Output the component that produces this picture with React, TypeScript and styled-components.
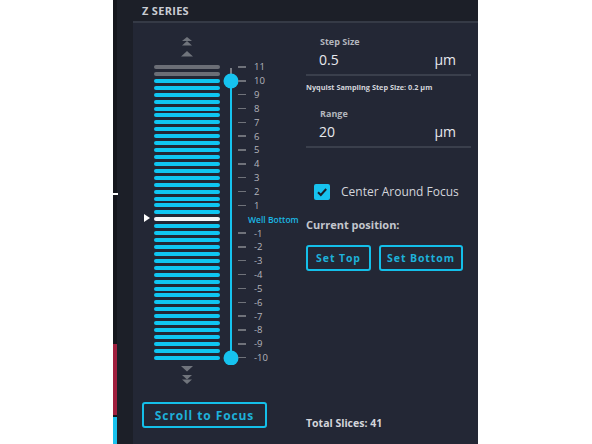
import React from "react";
import styled, { createGlobalStyle } from "styled-components";

const GlobalStyle = createGlobalStyle`
  html, body {
    margin: 0;
    padding: 0;
    background: #ffffff;
    font-family: "Open Sans", "Liberation Sans", sans-serif;
  }
`;

const Page = styled.div`
  display: flex;
  width: 592px;
  height: 444px;
  overflow: hidden;
  background: #ffffff;
`;

const Blank = styled.div`
  width: 113px;
  flex-shrink: 0;
`;

const Rail = styled.div`
  width: 4px;
  display: flex;
  flex-direction: column;
  background: #14161d;
  position: relative;
`;

const RailSpace = styled.div`
  flex: 1;
`;

const RailSegment = styled.div<{ $color: string; $h: number }>`
  height: ${(p) => p.$h}px;
  background: ${(p) => p.$color};
`;

const RailNotch = styled.div`
  position: absolute;
  left: 0;
  top: 193px;
  width: 5px;
  height: 2px;
  background: #ffffff;
`;

const Panel = styled.div`
  width: 361px;
  display: flex;
  flex-direction: column;
  background: #1c1f28;
  padding-left: 16px;
  box-sizing: border-box;
`;

const Header = styled.div`
  height: 21px;
  padding-left: 9px;
  display: flex;
  align-items: center;
  font-size: 11px;
  font-weight: 700;
  color: #c9ccd3;
  letter-spacing: 0.3px;
`;

const Body = styled.div`
  flex: 1;
  display: flex;
  border-top: 2px solid #353a46;
  background: #232735;
`;

const LeftCol = styled.div`
  width: 173px;
  display: flex;
  flex-direction: column;
  padding-top: 13px;
  box-sizing: border-box;
`;

const Chevrons = styled.div`
  width: 66px;
  margin-left: 21px;
  display: flex;
  justify-content: center;
`;

const StackRow = styled.div`
  display: flex;
  align-items: flex-start;
  padding-left: 21px;
  margin-top: 2px;
  height: 305px;
`;

const Bars = styled.div`
  position: relative;
  width: 66px;
  padding-top: 5px;
  display: flex;
  flex-direction: column;
  gap: 2.93px;
`;

const Bar = styled.div<{ $kind: "off" | "on" | "well" }>`
  height: 4px;
  border-radius: 2px;
  background: ${(p) =>
    p.$kind === "off" ? "#6b6e76" : p.$kind === "well" ? "#f4f5f7" : "#0fc6f2"};
`;

const Marker = styled.div`
  position: absolute;
  left: -10px;
  top: 154px;
  width: 0;
  height: 0;
  border-top: 4.5px solid transparent;
  border-bottom: 4.5px solid transparent;
  border-left: 6px solid #ffffff;
`;

const SliderSvg = styled.svg`
  margin-left: 3px;
  flex-shrink: 0;
`;

const Ticks = styled.div`
  display: flex;
  flex-direction: column;
  margin-left: -1px;
`;

const TickRow = styled.div`
  height: 13.857px;
  display: flex;
  align-items: center;
`;

const Dash = styled.div`
  width: 8px;
  height: 1.5px;
  background: #6f727a;
  margin-right: 8px;
`;

const TickLabel = styled.span<{ $well?: boolean }>`
  font-size: ${(p) => (p.$well ? "8.5px" : "9.5px")};
  font-weight: ${(p) => (p.$well ? 600 : 400)};
  color: ${(p) => (p.$well ? "#1bb8e4" : "#b3b5bc")};
  margin-left: ${(p) => (p.$well ? "10px" : "0")};
  white-space: nowrap;
`;

const OutlineButton = styled.button<{ $w: number; $fs: number }>`
  width: ${(p) => p.$w}px;
  height: 26px;
  box-sizing: border-box;
  border: 2px solid #14bfe9;
  border-radius: 3px;
  background: transparent;
  color: #1eb1da;
  font-family: "Open Sans", "Liberation Sans", sans-serif;
  font-weight: 700;
  font-size: ${(p) => p.$fs}px;
  letter-spacing: 0.9px;
  padding: 0;
  cursor: pointer;
`;

const ScrollWrap = styled.div`
  margin-top: 13px;
  margin-left: 9px;
`;

const RightCol = styled.div`
  width: 165px;
  display: flex;
  flex-direction: column;
  padding-top: 13px;
  padding-bottom: 14px;
  box-sizing: border-box;
`;

const Field = styled.div<{ $mt: number }>`
  margin-top: ${(p) => p.$mt}px;
  border-bottom: 2px solid #3a3f4c;
  padding-bottom: 5px;
`;

const FieldLabel = styled.div`
  padding-left: 14px;
  font-size: 9px;
  line-height: 12px;
  font-weight: 700;
  color: #b3b6bd;
`;

const FieldValue = styled.div`
  margin-top: 3px;
  display: flex;
  justify-content: space-between;
  padding: 0 15px 0 13px;
  font-size: 14px;
  line-height: 18px;
  color: #e7e9ed;
`;

const Note = styled.div`
  margin-top: 6px;
  font-size: 7.3px;
  line-height: 10px;
  font-weight: 700;
  color: #d3d5db;
  white-space: nowrap;
`;

const CheckRow = styled.label`
  margin-top: 35px;
  display: flex;
  align-items: center;
  padding-left: 8px;
  font-size: 12px;
  color: #d3d5db;
`;

const CheckBox = styled.span`
  width: 16px;
  height: 16px;
  border-radius: 2px;
  background: #17c2ee;
  display: flex;
  align-items: center;
  justify-content: center;
  margin-right: 11px;
`;

const SubTitle = styled.div`
  margin-top: 18px;
  font-size: 11px;
  line-height: 14px;
  font-weight: 700;
  color: #c3c6cd;
`;

const ButtonRow = styled.div`
  margin-top: 13px;
  display: flex;
  gap: 8px;
`;

const Total = styled.div`
  margin-top: auto;
  font-size: 10.5px;
  line-height: 14px;
  font-weight: 700;
  color: #d3d5db;
`;

function UpChevrons() {
  return (
    <svg width="20" height="22" viewBox="0 0 20 22">
      <path d="M10 1 L15 5 L5 5 Z" fill="#70747c" />
      <path d="M10 5 L15 9.5 L5 9.5 Z" fill="#70747c" />
      <path d="M10 15 L16 20.5 L4 20.5 Z" fill="#70747c" />
    </svg>
  );
}

function DownChevrons() {
  return (
    <svg width="20" height="24" viewBox="0 0 20 24">
      <path d="M4 1 L16 1 L10 6.5 Z" fill="#70747c" />
      <path d="M5 10 L15 10 L10 14.5 Z" fill="#70747c" />
      <path d="M5 14.5 L15 14.5 L10 19 Z" fill="#70747c" />
    </svg>
  );
}

const bars: ("off" | "on" | "well")[] = Array.from({ length: 43 }, (_, i) =>
  i < 2 ? "off" : i === 22 ? "well" : "on"
);

const ticks = Array.from({ length: 22 }, (_, i) => 11 - i);

export default function App() {
  return (
    <Page>
      <GlobalStyle />
      <Blank />
      <Rail>
        <RailSpace />
        <RailSegment $color="#a01f3e" $h={71} />
        <RailSegment $color="#14161d" $h={2} />
        <RailSegment $color="#18c2ee" $h={27} />
        <RailNotch />
      </Rail>
      <Panel>
        <Header>Z SERIES</Header>
        <Body>
          <LeftCol>
            <Chevrons>
              <UpChevrons />
            </Chevrons>
            <StackRow>
              <Bars>
                {bars.map((b, i) => (
                  <Bar key={i} $kind={b} />
                ))}
                <Marker />
              </Bars>
              <SliderSvg width="16" height="305" viewBox="0 0 16 305">
                <line x1="8" y1="8" x2="8" y2="16" stroke="#7a7d85" strokeWidth="2" />
                <line x1="8" y1="21" x2="8" y2="298" stroke="#16c3ef" strokeWidth="2" />
                <circle cx="8" cy="21" r="7.5" fill="#16c3ef" />
                <circle cx="8" cy="298" r="7.5" fill="#16c3ef" />
              </SliderSvg>
              <Ticks>
                {ticks.map((t) => (
                  <TickRow key={t}>
                    {t === 0 ? (
                      <TickLabel $well>Well Bottom</TickLabel>
                    ) : (
                      <>
                        <Dash />
                        <TickLabel>{t}</TickLabel>
                      </>
                    )}
                  </TickRow>
                ))}
              </Ticks>
            </StackRow>
            <Chevrons>
              <DownChevrons />
            </Chevrons>
            <ScrollWrap>
              <OutlineButton $w={125} $fs={12}>
                Scroll to Focus
              </OutlineButton>
            </ScrollWrap>
          </LeftCol>
          <RightCol>
            <Field $mt={0}>
              <FieldLabel>Step Size</FieldLabel>
              <FieldValue>
                <span>0.5</span>
                <span>µm</span>
              </FieldValue>
            </Field>
            <Note>Nyquist Sampling Step Size: 0.2 µm</Note>
            <Field $mt={16}>
              <FieldLabel>Range</FieldLabel>
              <FieldValue>
                <span>20</span>
                <span>µm</span>
              </FieldValue>
            </Field>
            <CheckRow>
              <CheckBox>
                <svg width="12" height="12" viewBox="0 0 12 12">
                  <path
                    d="M2 6.2 L4.8 9 L10.2 3"
                    fill="none"
                    stroke="#1b1e28"
                    strokeWidth="2"
                  />
                </svg>
              </CheckBox>
              Center Around Focus
            </CheckRow>
            <SubTitle>Current position:</SubTitle>
            <ButtonRow>
              <OutlineButton $w={65} $fs={10.5}>
                Set Top
              </OutlineButton>
              <OutlineButton $w={84} $fs={10.5}>
                Set Bottom
              </OutlineButton>
            </ButtonRow>
            <Total>Total Slices: 41</Total>
          </RightCol>
        </Body>
      </Panel>
    </Page>
  );
}
